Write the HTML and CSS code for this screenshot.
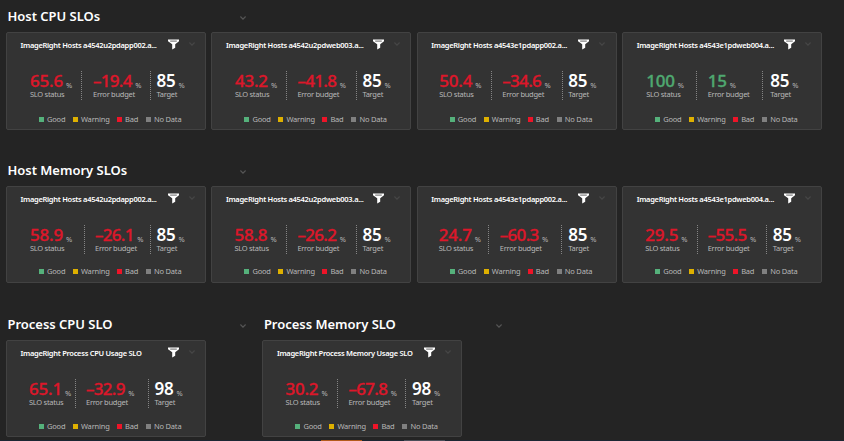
FILE: index.html
```
<!DOCTYPE html>
<html lang="en">
<head>
<meta charset="utf-8">
<title>SLO dashboard</title>
<link rel="stylesheet" href="styles.css">
</head>
<body>
<svg width="0" height="0" class="defs">
  <symbol id="funnel" viewBox="0 0 11 11"><path d="M0 .5H11V2.2L7.2 5.2V8.8L4.2 10.5V5.2L0 2.2Z" fill="#fff"/><path d="M2.2 2.1H8.8" stroke="#666" stroke-width="1"/></symbol>
  <symbol id="chev" viewBox="0 0 6 4"><path d="M.4 .5L3 3.1L5.6 .5" fill="none" stroke="currentColor" stroke-width="1.2"/></symbol>
</svg>
<main class="board" id="board"></main>
<div class="peek"><i class="orange"></i><i class="slate"></i></div>
<script src="board.js"></script>
</body>
</html>
```
FILE: styles.css
```
* { box-sizing: border-box; }
body { margin: 0; width: 844px; height: 441px; overflow: hidden; background: #242424; font-family: "Noto Sans", sans-serif; color: #fff; position: relative; }
.defs { position: absolute; }
.board { display: grid; grid-template-rows: 154px 154px 133px; }
.row { display: flex; }
.group-1, .group-2 { width: 256.4px; }
.head { display: flex; justify-content: space-between; align-items: center; width: 240px; height: 22px; margin: 5px 0 0 7.5px; }
.head h2 { margin: 0; font-size: 13px; line-height: 22px; font-weight: 600; white-space: nowrap; letter-spacing: -.02px; }
.head .chev { width: 6px; height: 4px; color: #555; margin-top: 4px; margin-right: 2px; }
.cards { display: flex; gap: 5.4px; margin: 5px 0 0 6px; }
.card { width: 200px; height: 98px; flex: none; background: #333; border: 1px solid #424242; border-radius: 2px; padding-top: 5px; }
.row-2 .card, .row-3 .card { height: 97px; padding-top: 5px; }
.title { display: flex; align-items: center; height: 13px; padding-left: 13.5px; }
.title span { width: 147px; flex: none; font-size: 7.5px; font-weight: 600; white-space: nowrap; letter-spacing: -.29px; }
.title .funnel { width: 11px; height: 11px; flex: none; margin-top: -1px; }
.title .chev { width: 6px; height: 4px; flex: none; margin: -2px 0 0 10px; color: #464646; }
.stats { display: grid; grid-template-columns: var(--cols); height: 29px; margin-top: 20px; }
.stat { padding-left: var(--p, 0); white-space: nowrap; }
.stat + .stat { border-left: 1px dotted #858585; }
.value { display: flex; align-items: baseline; height: 19px; line-height: 19px; }
.value b { font-size: 17px; font-weight: 500; letter-spacing: -.2px; -webkit-text-stroke: .35px currentColor; }
.value small { font-size: 7.5px; color: #b4b4b4; margin-left: 3px; position: relative; top: 1px; }
.label { font-size: 7.5px; line-height: 10px; margin-top: -1px; color: #b8b8b8; letter-spacing: -.28px; }
.bad b { color: #dc172a; }
.good b { color: #4fa870; }
.target .value b { color: #fff; font-weight: 600; -webkit-text-stroke: 0; }
.neg .value b { letter-spacing: -.7px; }
.neg .value small { margin-left: 3.5px; }
.legend { display: flex; height: 10px; margin: 14px 0 0 32px; font-size: 7.5px; line-height: 10px; color: #b8b8b8; letter-spacing: -.2px; }
.row-2 .legend { margin-top: 12px; }
.row-3 .legend { margin-top: 13px; }
.legend span { display: flex; align-items: center; gap: 3px; white-space: nowrap; }
.legend span::before { content: ""; width: 5px; height: 5px; background: var(--c); margin-top: 1px; }
.legend .l1 { --c: #55b17b; width: 34px; }
.legend .l2 { --c: #deb000; width: 44px; }
.legend .l3 { --c: #ee1428; width: 29px; }
.legend .l4 { --c: #808080; }
.peek { position: absolute; left: 0; right: 0; bottom: 0; height: 1px; background: #1b2733; }
.peek i { position: absolute; top: 0; height: 1px; width: 41px; }
.peek .orange { left: 321px; background: #b45b1c; }
.peek .slate { left: 404px; background: #4a4e59; }
```
FILE: board.js
```
const rows = [
  { groups: [{ name: 'Host CPU SLOs', cards: [
    ['ImageRight Hosts a4542u2pdapp002.a...', '65.6', '-19.4', '85', 24, 75, 87, 143.5, 150.5],
    ['ImageRight Hosts a4542u2pdweb003.a...', '43.2', '-41.8', '85', 23.5, 74.5, 86, 144.5, 151],
    ['ImageRight Hosts a4543e1pdapp002.a...', '50.4', '-34.6', '85', 22.5, 74.5, 85.5, 145, 151.5],
    ['ImageRight Hosts a4543e1pdweb004.a...', '100', '15', '85', 24, 73.5, 85.5, 139.5, 148]] }] },
  { groups: [{ name: 'Host Memory SLOs', cards: [
    ['ImageRight Hosts a4542u2pdapp002.a...', '58.9', '-26.1', '85', 24, 77.5, 89, 143.5, 150.5],
    ['ImageRight Hosts a4542u2pdweb003.a...', '58.8', '-26.2', '85', 23, 75, 86, 144.5, 151],
    ['ImageRight Hosts a4543e1pdapp002.a...', '24.7', '-60.3', '85', 22, 71.5, 83, 144.5, 151.5],
    ['ImageRight Hosts a4543e1pdweb004.a...', '29.5', '-55.5', '85', 23, 74.5, 85.5, 144, 150.5]] }] },
  { groups: [
    { name: 'Process CPU SLO', cards: [['ImageRight Process CPU Usage SLO', '65.1', '-32.9', '98', 23, 68.5, 80, 142, 148.5]] },
    { name: 'Process Memory SLO', cards: [['ImageRight Process Memory Usage SLO', '30.2', '-67.8', '98', 23, 75, 86, 143, 149.5]] }] }
];
const icon = n => `<svg class="${n}"><use href="#${n}"/></svg>`;
const stat = (cls, v, label, pad) => `<div class="stat ${cls}${v[0] === '-' ? ' neg' : ''}" style="--p:${pad}px"><div class="value"><b>${v.replace('-', '–')}</b><small>%</small></div><div class="label">${label}</div></div>`;
const card = ([t, a, b, c, x1, d1, x2, d2, x3]) => {
  const tone = a === '100' ? 'good' : 'bad';
  return `<article class="card"><div class="title"><span>${t}</span>${icon('funnel')}${icon('chev')}</div>
  <div class="stats" style="--cols:${d1 - 1}px ${d2 - d1}px 1fr">${stat(tone, a, 'SLO status', x1 - 1)}${stat(tone, b, 'Error budget', x2 - d1 - 1)}${stat('target', c, 'Target', x3 - d2 - 1)}</div>
  <div class="legend"><span class="l1">Good</span><span class="l2">Warning</span><span class="l3">Bad</span><span class="l4">No Data</span></div></article>`;
};
document.getElementById('board').innerHTML = rows.map((r, i) =>
  `<section class="row row-${i + 1}">${r.groups.map(g => `<div class="group group-${r.groups.length}"><div class="head"><h2>${g.name}</h2>${icon('chev')}</div><div class="cards">${g.cards.map(card).join('')}</div></div>`).join('')}</section>`).join('');
```
